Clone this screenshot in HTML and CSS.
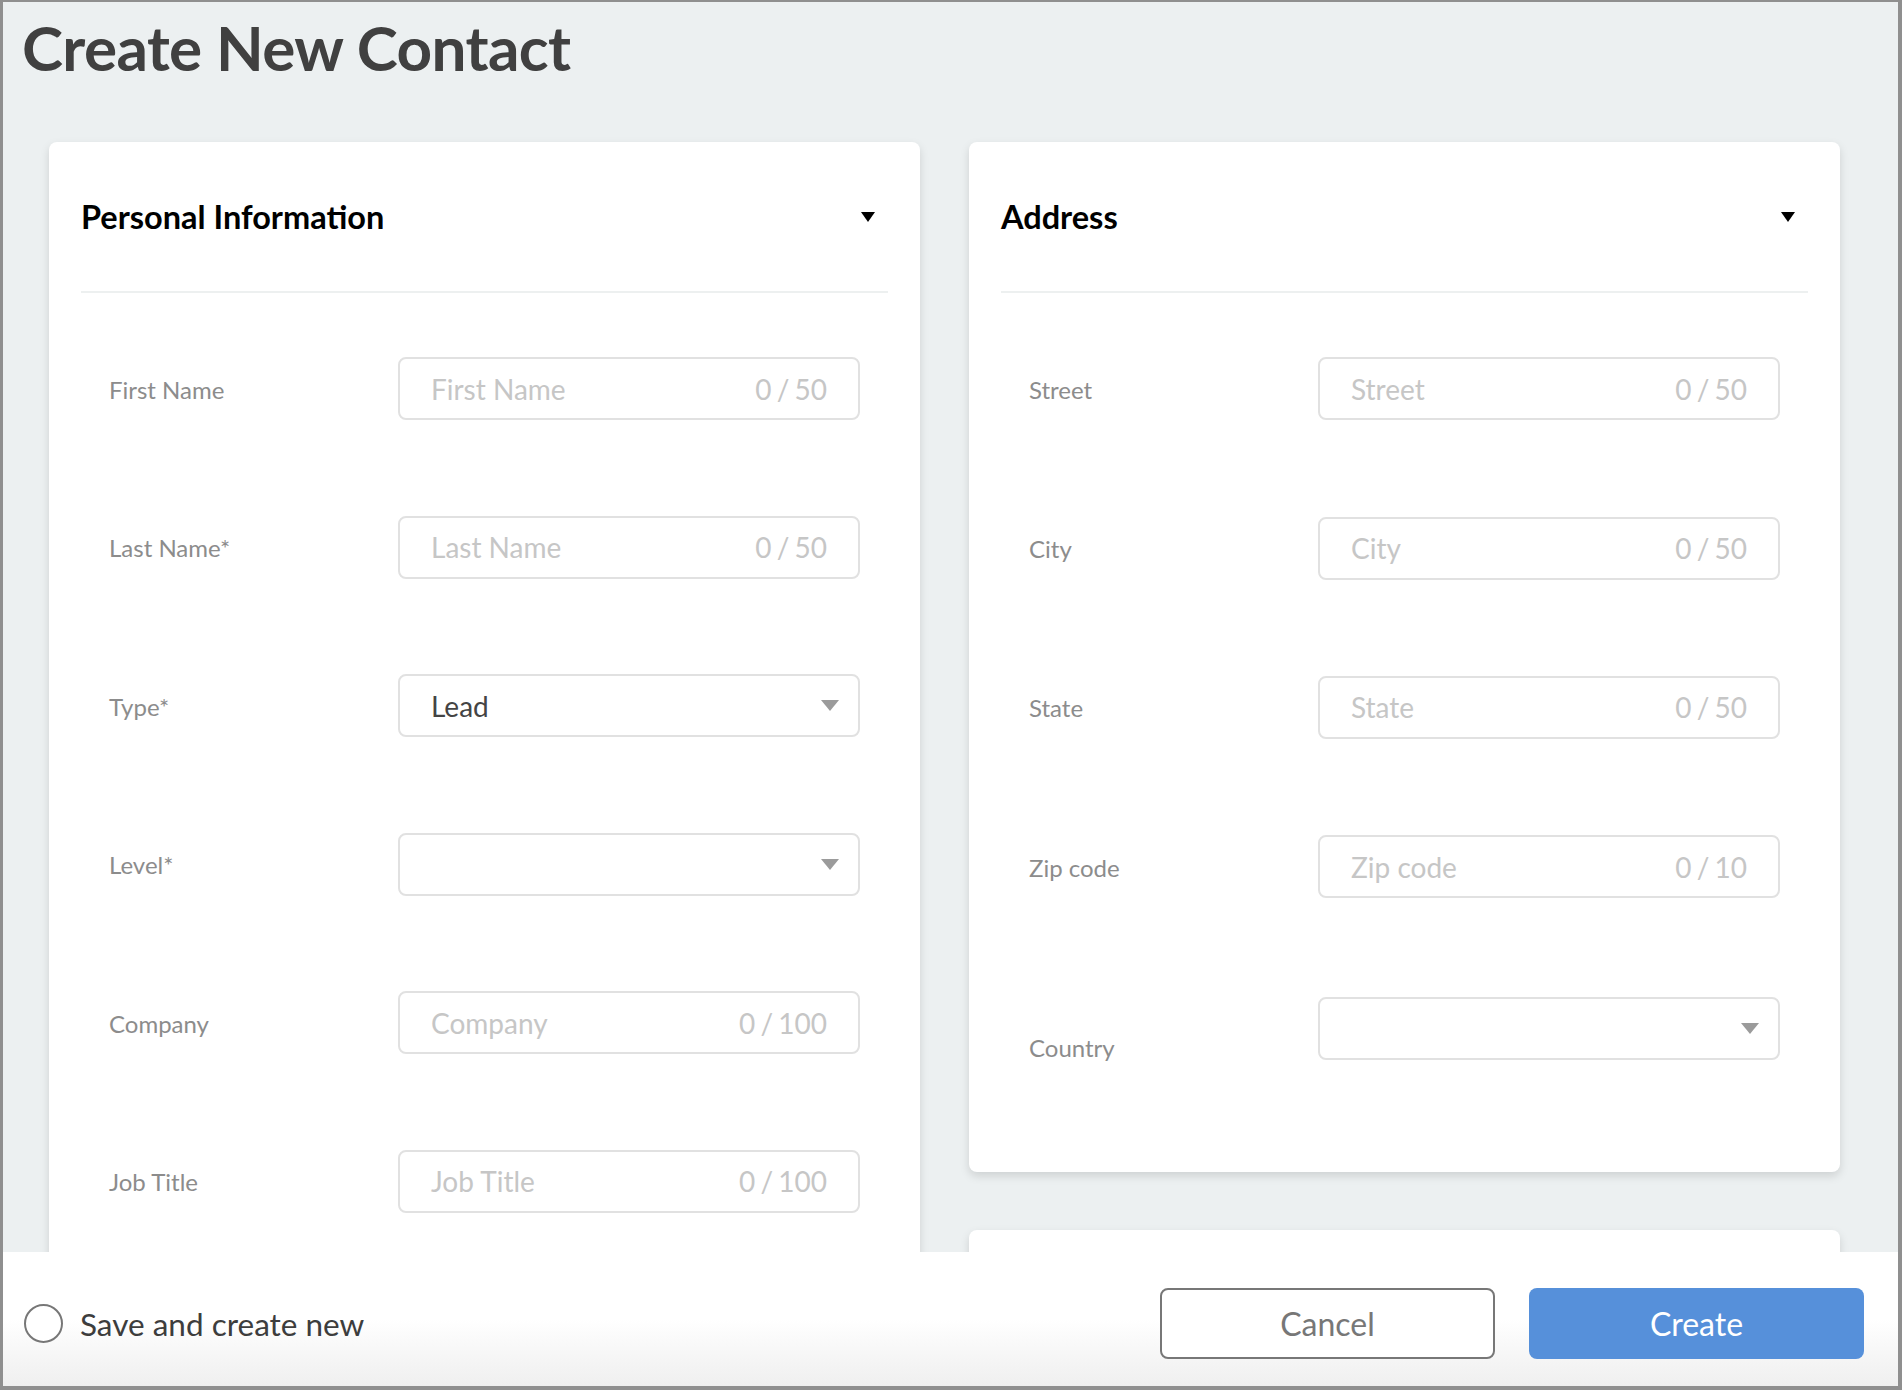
FILE: index.html
```html
<!DOCTYPE html>
<html lang="en">
<head>
<meta charset="utf-8">
<title>Create New Contact</title>
<link rel="stylesheet" href="styles.css">
</head>
<body>
<div class="frame">
  <main class="content">
    <h1 class="title">Create New Contact</h1>
    <div class="columns">
      <div class="column">
        <section class="card">
          <header class="card-header">
            <h2 class="card-title">Personal Information</h2>
            <span class="caret"></span>
          </header>
          <div class="card-body">
            <div class="field">
              <span class="label">First Name</span>
              <div class="input"><span class="placeholder">First Name</span><span class="count">0 / 50</span></div>
            </div>
            <div class="field">
              <span class="label">Last Name*</span>
              <div class="input"><span class="placeholder">Last Name</span><span class="count">0 / 50</span></div>
            </div>
            <div class="field">
              <span class="label">Type*</span>
              <div class="input"><span class="value">Lead</span><span class="select-caret"></span></div>
            </div>
            <div class="field">
              <span class="label">Level*</span>
              <div class="input"><span class="value"></span><span class="select-caret"></span></div>
            </div>
            <div class="field">
              <span class="label">Company</span>
              <div class="input"><span class="placeholder">Company</span><span class="count">0 / 100</span></div>
            </div>
            <div class="field">
              <span class="label">Job Title</span>
              <div class="input"><span class="placeholder">Job Title</span><span class="count">0 / 100</span></div>
            </div>
          </div>
        </section>
      </div>
      <div class="column">
        <section class="card card-address">
          <header class="card-header">
            <h2 class="card-title">Address</h2>
            <span class="caret"></span>
          </header>
          <div class="card-body">
            <div class="field">
              <span class="label">Street</span>
              <div class="input"><span class="placeholder">Street</span><span class="count">0 / 50</span></div>
            </div>
            <div class="field">
              <span class="label">City</span>
              <div class="input"><span class="placeholder">City</span><span class="count">0 / 50</span></div>
            </div>
            <div class="field">
              <span class="label">State</span>
              <div class="input"><span class="placeholder">State</span><span class="count">0 / 50</span></div>
            </div>
            <div class="field">
              <span class="label">Zip code</span>
              <div class="input"><span class="placeholder">Zip code</span><span class="count">0 / 10</span></div>
            </div>
            <div class="field field-low">
              <span class="label">Country</span>
              <div class="input"><span class="value"></span><span class="select-caret"></span></div>
            </div>
          </div>
        </section>
        <section class="card card-next"></section>
      </div>
    </div>
  </main>
  <footer class="footer">
    <label class="save-new">
      <span class="radio"></span>
      <span class="save-text">Save and create new</span>
    </label>
    <div class="actions">
      <button class="btn btn-cancel" type="button">Cancel</button>
      <button class="btn btn-create" type="button">Create</button>
    </div>
  </footer>
</div>
</body>
</html>
```

FILE: styles.css
```css
* {
  box-sizing: border-box;
}

html, body {
  margin: 0;
  padding: 0;
}

body {
  font-family: Lato, "Open Sans", "Liberation Sans", sans-serif;
  background: #ecf0f1;
}

.frame {
  width: 1902px;
  height: 1390px;
  display: flex;
  flex-direction: column;
  border-style: solid;
  border-color: #8f8f8f;
  border-width: 2px 4px 4px 3px;
  background: #ecf0f1;
  overflow: hidden;
}

.content {
  flex: 1;
  min-height: 0;
  overflow: hidden;
  padding: 8px 0 0 19px;
}

.title {
  margin: 0;
  font-size: 62px;
  line-height: 1.2;
  font-weight: 700;
  color: #404040;
  letter-spacing: -0.6px;
}

.columns {
  display: flex;
  gap: 49px;
  margin-top: 58px;
  margin-left: 27px;
}

.column {
  width: 871px;
  display: flex;
  flex-direction: column;
  gap: 58px;
}

.card {
  background: #fff;
  border-radius: 8px;
  box-shadow: 0 4px 10px rgba(0, 0, 0, 0.13);
  padding: 0 32px;
}

.card-header {
  height: 151px;
  display: flex;
  align-items: center;
  justify-content: space-between;
  border-bottom: 2px solid #edf0f0;
}

.card-title {
  margin: 0;
  font-size: 32.5px;
  line-height: 36px;
  font-weight: 700;
  color: #000;
}

.caret {
  width: 0;
  height: 0;
  border-left: 7.5px solid transparent;
  border-right: 7.5px solid transparent;
  border-top: 10px solid #000;
  margin-right: 13px;
}

.card-body {
  padding: 64px 0 160px 28px;
  display: flex;
  flex-direction: column;
  gap: 95.5px;
}

.card-address .card-body {
  padding-bottom: 110px;
  gap: 96.3px;
}

.field {
  display: flex;
  align-items: center;
}

.label {
  width: 289px;
  flex: none;
  font-size: 24px;
  color: #8c8c8c;
  margin-top: 1px;
}

.field-low .label {
  align-self: flex-start;
  margin-top: 38px;
}

.input {
  width: 462px;
  height: 63px;
  border: 2px solid #e1e1e1;
  border-radius: 8px;
  display: flex;
  align-items: center;
  justify-content: space-between;
  padding: 0 31px;
  font-size: 28px;
}

.placeholder,
.count {
  color: #c6c6c6;
}

.count {
  word-spacing: -2px;
}

.value {
  color: #444;
}

.select-caret {
  width: 0;
  height: 0;
  border-left: 9.5px solid transparent;
  border-right: 9.5px solid transparent;
  border-top: 11px solid #9b9b9b;
  margin-right: -12px;
}

.card-next {
  height: 120px;
  flex: none;
}

.footer {
  flex: none;
  height: 134px;
  display: flex;
  align-items: center;
  justify-content: space-between;
  padding: 9px 34px 0 21px;
  background: linear-gradient(to bottom, #ffffff 50%, #efefef 100%);
  position: relative;
  z-index: 1;
}

.save-new {
  display: flex;
  align-items: center;
  gap: 17px;
}

.radio {
  width: 39px;
  height: 39px;
  border: 2px solid #777;
  border-radius: 50%;
  background: #fff;
}

.save-text {
  font-size: 31.5px;
  color: #3d3d3d;
}

.actions {
  display: flex;
  gap: 34px;
}

.btn {
  width: 335px;
  height: 71px;
  border-radius: 8px;
  font-family: Lato, "Open Sans", "Liberation Sans", sans-serif;
  font-size: 32px;
  cursor: pointer;
}

.btn-cancel {
  background: #fff;
  border: 2px solid #777;
  color: #777;
}

.btn-create {
  background: #5690da;
  border: none;
  color: #fff;
}
```
